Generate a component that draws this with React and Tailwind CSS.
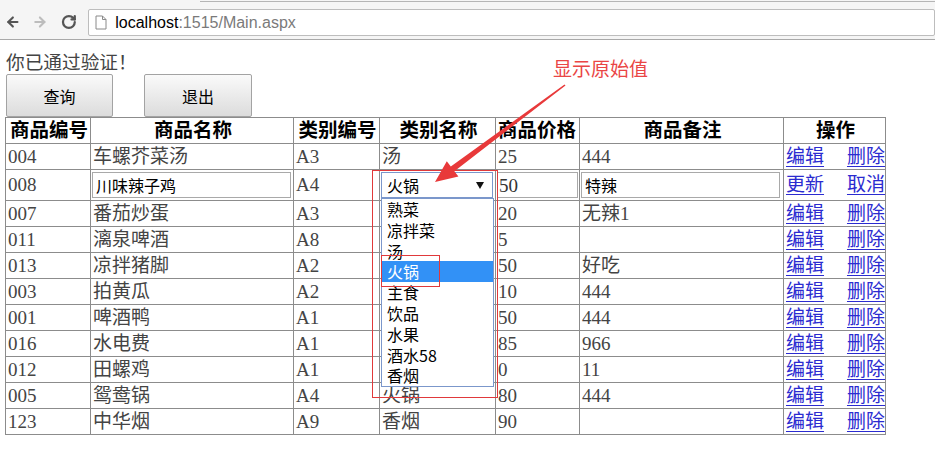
import React from 'react';
import { ArrowLeft, ArrowRight, RotateCw } from 'lucide-react';

// category cells under the open list are covered, so they stay empty
const rows = [
  ['004', '车螺芥菜汤', 'A3', '汤', '25', '444'],
  'edit',
  ['007', '番茄炒蛋', 'A3', '', '20', '无辣1'],
  ['011', '漓泉啤酒', 'A8', '', '5', ''],
  ['013', '凉拌猪脚', 'A2', '', '50', '好吃'],
  ['003', '拍黄瓜', 'A2', '', '10', '444'],
  ['001', '啤酒鸭', 'A1', '', '50', '444'],
  ['016', '水电费', 'A1', '', '85', '966'],
  ['012', '田螺鸡', 'A1', '', '0', '11'],
  ['005', '鸳鸯锅', 'A4', '火锅', '80', '444'],
  ['123', '中华烟', 'A9', '香烟', '90', ''],
];

const options = ['熟菜', '凉拌菜', '汤', '火锅', '主食', '饮品', '水果', '酒水58', '香烟'];

const headers = ['商品编号', '商品名称', '类别编号', '类别名称', '商品价格', '商品备注', '操作'];

const cell = 'border border-[#8c8c8c] p-0 pl-[2px] h-[26px] align-middle whitespace-nowrap overflow-hidden';

const Links = ({ a, b }) => (
  <div className="flex justify-between pr-0 text-[#2b2bd0] underline underline-offset-[3px] decoration-1">
    <a href="#">{a}</a>
    <a href="#">{b}</a>
  </div>
);

const Field = ({ w, children }) => (
  <div className={`${w} h-[26px] border border-[#a9a9a9] bg-white pl-[3px] text-[16px] leading-[24px] text-black font-['Noto_Sans_CJK_SC',sans-serif]`}>
    {children}
  </div>
);

const Toolbar = () => (
  <div className="relative h-[40px] bg-[#f5f5f5] border-b border-[#a9a9a9]">
    <div className="absolute top-0 left-[200px] right-0 h-[2px] border-b border-[#b5b5b5]" />
    <div className="flex items-start pt-[9px] pl-[5px]">
      <ArrowLeft size={16} strokeWidth={3.2} className="mt-[5px] text-[#555]" />
      <ArrowRight size={16} strokeWidth={3.2} className="mt-[5px] ml-[11px] text-[#bdbdbd]" />
      <RotateCw size={16} strokeWidth={3.4} className="mt-[5px] ml-[13px] text-[#555]" />
      <div className="ml-[12px] w-[860px] h-[27px] bg-white border border-[#bdbdbd] rounded-[2px] flex items-center pl-[6px]">
        <svg width="12" height="15" viewBox="0 0 12 15" className="text-[#8a8a8a]">
          <path d="M1 1h6.5L11 4.5V14H1z M7.5 1v3.5H11" fill="none" stroke="currentColor" strokeWidth="1" />
        </svg>
        <span className="ml-[8px] text-[16px] font-['Liberation_Sans',sans-serif] text-black">
          localhost<span className="text-[#7a7a7a]">:1515/Main.aspx</span>
        </span>
      </div>
    </div>
  </div>
);

export default function App() {
  return (
    <div className="relative w-[935px] h-[470px] overflow-hidden bg-white font-['Liberation_Serif','Noto_Sans_CJK_SC',serif] text-[19px] text-[#444]">
      <Toolbar />

      <div className="pl-[6px] pt-[11px] h-[34px] leading-[23px] text-[18.67px] text-[#444]">你已通过验证！</div>

      <div className="flex pl-[6px] font-['Noto_Sans_CJK_SC',sans-serif] text-[16px] text-black">
        <button className="w-[107px] h-[43px] border border-[#a3a3a3] rounded-[2px] bg-gradient-to-b from-[#fafafa] to-[#dcdcdc]">查询</button>
        <button className="ml-[31px] w-[108px] h-[43px] border border-[#a3a3a3] rounded-[2px] bg-gradient-to-b from-[#fafafa] to-[#dcdcdc]">退出</button>
      </div>

      <table className="ml-[5px] w-[880px] table-fixed border-collapse leading-[22px]">
        <colgroup>
          <col className="w-[85px]" />
          <col className="w-[203px]" />
          <col className="w-[86px]" />
          <col className="w-[116px]" />
          <col className="w-[84px]" />
          <col className="w-[204px]" />
          <col className="w-[102px]" />
        </colgroup>
        <thead>
          <tr>
            {headers.map((h, i) => (
              <th key={h} className={`${cell} ${i === 4 ? 'text-left' : 'text-center'} font-bold text-black text-[19.5px]`}>{h}</th>
            ))}
          </tr>
        </thead>
        <tbody>
          {rows.map((r, i) =>
            r === 'edit' ? (
              <tr key="edit">
                <td className={`${cell} h-[31px]`}>008</td>
                <td className="border border-[#8c8c8c] p-0 pl-[1px]"><Field w="w-[199px]">川味辣子鸡</Field></td>
                <td className={cell}>A4</td>
                <td className="border border-[#8c8c8c] p-0 pl-[1px]">
                  <div className="w-[112px] h-[26px] border border-[#7b97cb] bg-white flex items-center pl-[5px] pr-[8px] text-[16px] text-black font-['Noto_Sans_CJK_SC',sans-serif]">
                    <span className="flex-1">火锅</span>
                    <svg width="8" height="7" viewBox="0 0 8 7"><path d="M0 0h8L4 7z" fill="#111" /></svg>
                  </div>
                </td>
                <td className="border border-[#8c8c8c] p-0 pl-[1px]"><Field w="w-[81px]"><span className="font-['Liberation_Serif',serif] text-[19px] text-[#333] -ml-[2px]">50</span></Field></td>
                <td className="border border-[#8c8c8c] p-0 pl-[1px]"><Field w="w-[199px]">特辣</Field></td>
                <td className={cell}><Links a="更新" b="取消" /></td>
              </tr>
            ) : (
              <tr key={i}>
                {r.map((v, j) => (
                  <td key={j} className={cell}>{v}</td>
                ))}
                <td className={cell}><Links a="编辑" b="删除" /></td>
              </tr>
            )
          )}
        </tbody>
      </table>

      {/* open select list */}
      <div className="absolute left-[381px] top-[198px] w-[113px] border border-[#7b97cb] bg-white font-['Noto_Sans_CJK_SC',sans-serif] text-[16px] text-black">
        {options.map((o) => (
          <div key={o} className={`h-[20.8px] leading-[20.8px] pl-[5px] ${o === '火锅' ? 'bg-[#3291f6] text-white' : ''}`}>{o}</div>
        ))}
      </div>

      {/* annotations */}
      <div className="absolute left-[372px] top-[170px] w-[126px] h-[228px] border border-[#e0393b]" />
      <div className="absolute left-[381px] top-[255px] w-[59px] h-[32px] border border-[#e0393b]" />
      <div className="absolute left-[553px] top-[56px] text-[19px] leading-[24px] text-[#ea4545] font-['Noto_Sans_CJK_SC',sans-serif]">显示原始值</div>
      <svg className="absolute left-0 top-0" width="935" height="470" viewBox="0 0 935 470">
        <polygon
          points="564.5,84.5 450.8,166.4 446.8,161.2 435,182 458.4,176.4 454.4,171.2 565.5,85.5"
          fill="#e8393a"
        />
      </svg>
    </div>
  );
}
